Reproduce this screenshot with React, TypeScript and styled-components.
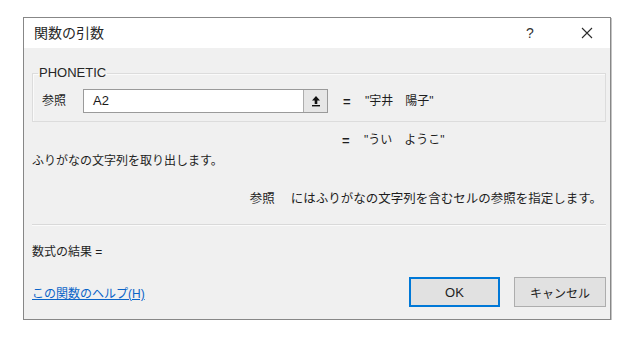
import React from "react";
import styled, { createGlobalStyle } from "styled-components";

const GlobalStyle = createGlobalStyle`
  html, body { margin: 0; padding: 0; background: #ffffff; }
  body {
    font-family: "Liberation Sans", "Noto Sans CJK JP", sans-serif;
    color: #1e1e1e;
  }
`;

const Page = styled.div`
  padding: 17px 0 0 23px;
`;

const Dialog = styled.div`
  box-sizing: border-box;
  width: 588px;
  background: #f0f0f0;
  border: 1px solid #878787;
  box-shadow: 1px 1px 0 #c4c4c4;
`;

const TitleBar = styled.div`
  display: flex;
  align-items: center;
  height: 30px;
  background: #ffffff;
  padding-left: 10px;
`;

const Title = styled.div`
  flex: 1;
  font-size: 14px;
  line-height: 18px;
  color: #262626;
`;

const TitleButton = styled.div<{ $w: number }>`
  width: ${(p) => p.$w}px;
  height: 30px;
  display: flex;
  align-items: center;
  justify-content: center;
  font-size: 14px;
  color: #333;
`;

const Body = styled.div`
  padding: 0 4px 12px 8px;
`;

const Group = styled.fieldset`
  margin: 17px 0 0 0;
  padding: 8px 10px 8px 9px;
  border: 1px solid #dcdcdc;
  box-shadow: inset 1px 1px 0 #fafafa;
`;

const Legend = styled.legend`
  margin-left: -4px;
  padding: 0 1px;
  font-size: 13px;
  line-height: 16px;
  color: #262626;
`;

const ArgRow = styled.div`
  display: flex;
  align-items: center;
  height: 24px;
`;

const ArgLabel = styled.div`
  width: 41px;
  font-size: 12px;
  line-height: 16px;
`;

const InputBox = styled.div`
  box-sizing: border-box;
  display: flex;
  width: 245px;
  height: 24px;
  background: #fff;
  border: 1px solid #9a9a9a;
`;

const InputText = styled.div`
  flex: 1;
  padding-left: 9px;
  font-size: 13px;
  line-height: 22px;
  color: #1a1a1a;
`;

const CollapseButton = styled.div`
  box-sizing: border-box;
  width: 24px;
  height: 22px;
  background: #e6e6e6;
  border-left: 1px solid #adadad;
  display: flex;
  align-items: center;
  justify-content: center;
`;

const Equals = styled.span`
  display: inline-block;
  width: 22px;
  font-size: 13px;
  font-weight: bold;
`;

const Value = styled.span`
  font-size: 12px;
  line-height: 16px;
`;

const ValueCell = styled.div`
  margin-left: 15px;
  display: flex;
  align-items: center;
`;

const ResultLine = styled.div`
  margin-top: 10px;
  padding-left: 310px;
  display: flex;
  align-items: center;
  height: 16px;
`;

const Text = styled.div<{ $top: number }>`
  margin-top: ${(p) => p.$top}px;
  font-size: 12px;
  line-height: 16px;
`;

const ArgHelp = styled.div`
  margin-top: 22px;
  display: flex;
  justify-content: flex-end;
  gap: 16px;
  padding-right: 4px;
  font-size: 12.5px;
  line-height: 16px;
`;

const Separator = styled.div`
  margin-top: 17px;
  height: 1px;
  background: #d9d9d9;
  box-shadow: 0 1px 0 #fafafa;
`;

const Footer = styled.div`
  margin-top: 17px;
  display: flex;
  align-items: center;
`;

const HelpLink = styled.a`
  flex: 1;
  font-size: 12px;
  line-height: 16px;
  color: #0a64c8;
  text-decoration: underline;
  margin-top: 3px;
`;

const Button = styled.button<{ $primary?: boolean }>`
  box-sizing: border-box;
  width: ${(p) => (p.$primary ? 91 : 92)}px;
  height: 30px;
  margin-left: ${(p) => (p.$primary ? 0 : 14)}px;
  background: #e1e1e1;
  border: ${(p) => (p.$primary ? "2px solid #0078d7" : "1px solid #adadad")};
  font-family: "Liberation Sans", "Noto Sans CJK JP", sans-serif;
  font-size: ${(p) => (p.$primary ? 13 : 12)}px;
  color: #1e1e1e;
  padding: 0;
`;

const UpIcon = () => (
  <svg width="10" height="12" viewBox="0 0 10 12">
    <path d="M5 1 L9 5.5 H6.3 V9 H3.7 V5.5 H1 Z" fill="#111" />
    <rect x="1" y="10" width="8" height="1.4" fill="#111" />
  </svg>
);

const CloseIcon = () => (
  <svg width="12" height="12" viewBox="0 0 12 12">
    <path d="M1 1 L11 11 M11 1 L1 11" stroke="#2b2b2b" strokeWidth="1.1" />
  </svg>
);

export default function App() {
  return (
    <>
      <GlobalStyle />
      <Page>
        <Dialog>
          <TitleBar>
            <Title>関数の引数</Title>
            <TitleButton $w={46}>?</TitleButton>
            <TitleButton $w={11} />
            <TitleButton $w={46}>
              <CloseIcon />
            </TitleButton>
          </TitleBar>
          <Body>
            <Group>
              <Legend>PHONETIC</Legend>
              <ArgRow>
                <ArgLabel>参照</ArgLabel>
                <InputBox>
                  <InputText>A2</InputText>
                  <CollapseButton>
                    <UpIcon />
                  </CollapseButton>
                </InputBox>
                <ValueCell>
                  <Equals>=</Equals>
                  <Value>"宇井　陽子"</Value>
                </ValueCell>
              </ArgRow>
            </Group>
            <ResultLine>
              <Equals>=</Equals>
              <Value>"うい　ようこ"</Value>
            </ResultLine>
            <Text $top={5}>ふりがなの文字列を取り出します。</Text>
            <ArgHelp>
              <span>参照</span>
              <span>にはふりがなの文字列を含むセルの参照を指定します。</span>
            </ArgHelp>
            <Separator />
            <Text $top={19}>数式の結果 =</Text>
            <Footer>
              <HelpLink href="#">この関数のヘルプ(H)</HelpLink>
              <Button $primary>OK</Button>
              <Button>キャンセル</Button>
            </Footer>
          </Body>
        </Dialog>
      </Page>
    </>
  );
}
